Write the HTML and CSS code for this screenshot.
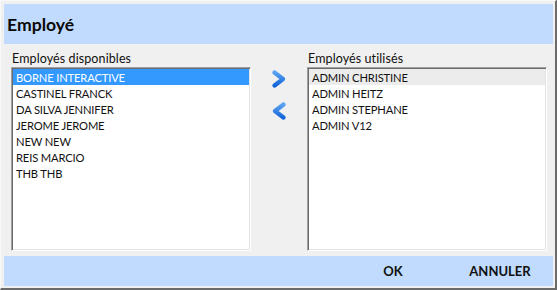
FILE: index.html
```html
<!DOCTYPE html>
<html lang="fr">
<head>
<meta charset="utf-8">
<title>Employé</title>
<link rel="stylesheet" href="styles.css">
</head>
<body>
<div class="window">
  <div class="header"><h1 class="title">Employé</h1></div>
  <div class="main">
    <div class="col">
      <div class="label">Employés disponibles</div>
      <ul class="list">
        <li class="item selected">BORNE INTERACTIVE</li>
        <li class="item">CASTINEL FRANCK</li>
        <li class="item">DA SILVA JENNIFER</li>
        <li class="item">JEROME JEROME</li>
        <li class="item">NEW NEW</li>
        <li class="item">REIS MARCIO</li>
        <li class="item">THB THB</li>
      </ul>
    </div>
    <div class="arrows">
      <button class="arrow" aria-label="Ajouter">
        <svg width="16" height="20" viewBox="0 0 16 20">
          <defs>
            <linearGradient id="g1" x1="0" y1="0" x2="0" y2="1">
              <stop offset="0" stop-color="#5aa2f2"/>
              <stop offset="1" stop-color="#1466d8"/>
            </linearGradient>
          </defs>
          <polyline points="3.5,3.5 12,10 3.5,16.5" fill="none" stroke="url(#g1)" stroke-width="4.4" stroke-linecap="round" stroke-linejoin="round"/>
        </svg>
      </button>
      <button class="arrow" aria-label="Retirer">
        <svg width="16" height="20" viewBox="0 0 16 20">
          <defs>
            <linearGradient id="g2" x1="0" y1="0" x2="0" y2="1">
              <stop offset="0" stop-color="#5aa2f2"/>
              <stop offset="1" stop-color="#1466d8"/>
            </linearGradient>
          </defs>
          <polyline points="12.5,3.5 4,10 12.5,16.5" fill="none" stroke="url(#g2)" stroke-width="4.4" stroke-linecap="round" stroke-linejoin="round"/>
        </svg>
      </button>
    </div>
    <div class="col">
      <div class="label">Employés utilisés</div>
      <ul class="list">
        <li class="item hover">ADMIN CHRISTINE</li>
        <li class="item">ADMIN HEITZ</li>
        <li class="item">ADMIN STEPHANE</li>
        <li class="item">ADMIN V12</li>
      </ul>
    </div>
  </div>
  <div class="footer">
    <button class="btn">OK</button>
    <button class="btn">ANNULER</button>
  </div>
</div>
</body>
</html>
```
FILE: styles.css
```css
html, body {
  margin: 0;
  padding: 0;
  background: #f0f0f0;
}

.window {
  width: 557px;
  height: 290px;
  box-sizing: border-box;
  background: #f0f0f0;
  border-top: 1px solid #f9f9f9;
  border-left: 1px solid #f9f9f9;
  border-right: 2px solid #6b6b6b;
  border-bottom: 2px solid #6b6b6b;
  padding: 3px 2px 2px 3px;
  display: flex;
  flex-direction: column;
  font-family: Lato, "Open Sans", sans-serif;
  color: #000;
}

.header {
  height: 40px;
  background: #c0dbfd;
  display: flex;
  align-items: center;
  padding-left: 3px;
  flex: none;
}

.title {
  margin: 0;
  font-size: 17.6px;
  font-weight: 700;
  color: #0a0a0a;
}

.main {
  flex: 1;
  display: flex;
  padding: 7px 0 0 7px;
}

.col {
  width: 240px;
  display: flex;
  flex-direction: column;
}

.label {
  font-size: 12.5px;
  letter-spacing: 0.1px;
  line-height: 15px;
  height: 15px;
  margin-bottom: 1px;
  padding-left: 1px;
  color: #111;
}

.list {
  list-style: none;
  margin: 0;
  padding: 1px 1px;
  height: 184px;
  box-sizing: border-box;
  background: #fff;
  border: 1px solid;
  border-color: #a0a0a0 #fff #fff #a0a0a0;
  box-shadow: inset 1px 1px 0 #6b6b6b, inset -1px -1px 0 #e3e3e3;
}

.item {
  height: 16px;
  line-height: 17px;
  font-size: 11.2px;
  letter-spacing: -0.15px;
  padding-left: 3px;
  white-space: nowrap;
  color: #111;
}

.item.selected {
  background: #3399ff;
  color: #fff;
}

.item.hover {
  background: #ececec;
}

.arrows {
  width: 56px;
  display: flex;
  flex-direction: column;
  align-items: center;
  padding-top: 18px;
  gap: 12px;
}

.arrow {
  border: 0;
  background: none;
  padding: 0;
  margin: 0;
  width: 16px;
  height: 20px;
  display: block;
  cursor: pointer;
}

.arrow svg {
  display: block;
}

.footer {
  height: 30px;
  flex: none;
  background: #c0dbfd;
  display: flex;
  justify-content: flex-end;
  align-items: center;
  gap: 27px;
  padding-right: 13px;
}

.btn {
  width: 80px;
  border: 0;
  background: none;
  padding: 0;
  font-family: Lato, "Open Sans", sans-serif;
  font-size: 13px;
  font-weight: 700;
  color: #111;
  text-align: center;
}
```
